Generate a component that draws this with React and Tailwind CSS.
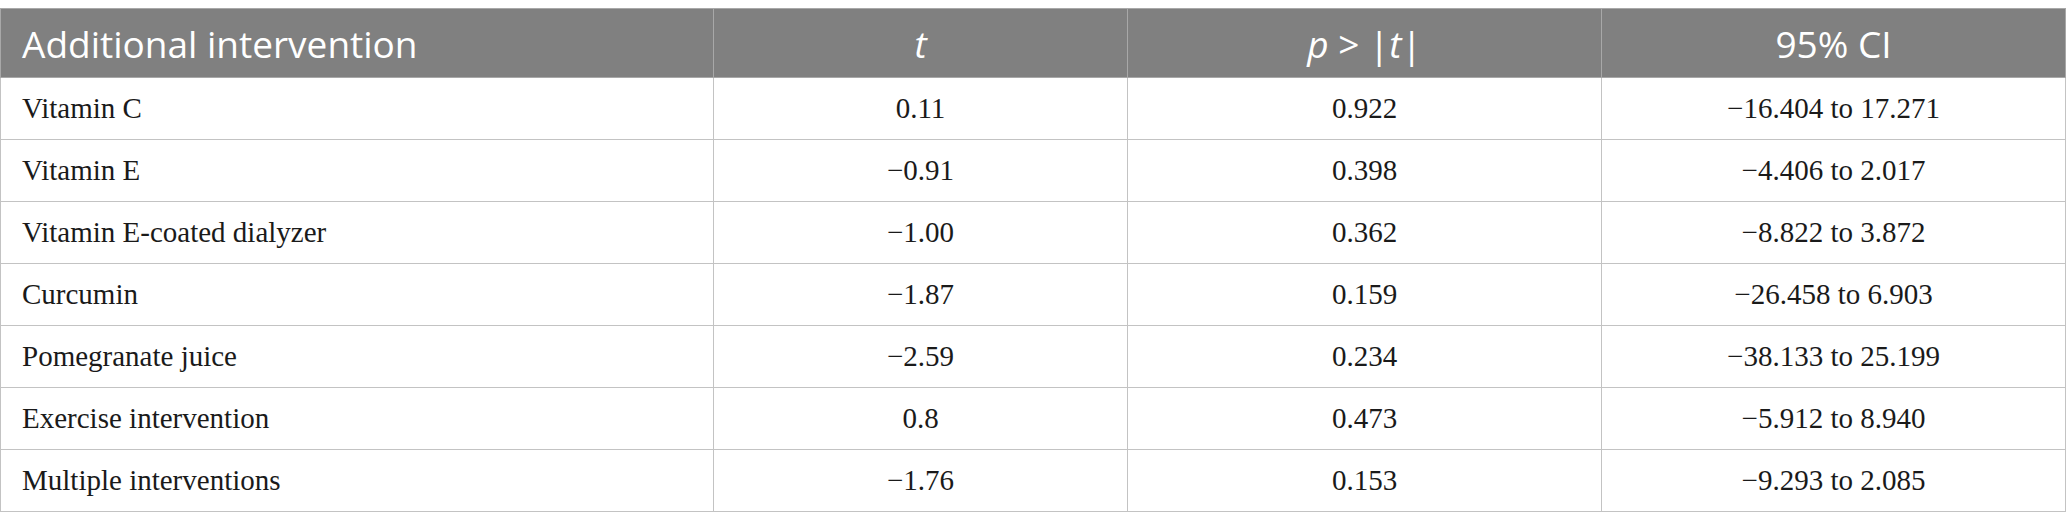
import React from 'react';

const rows = [
  ['Vitamin C', '0.11', '0.922', '\u221216.404 to 17.271'],
  ['Vitamin E', '\u22120.91', '0.398', '\u22124.406 to 2.017'],
  ['Vitamin E-coated dialyzer', '\u22121.00', '0.362', '\u22128.822 to 3.872'],
  ['Curcumin', '\u22121.87', '0.159', '\u221226.458 to 6.903'],
  ['Pomegranate juice', '\u22122.59', '0.234', '\u221238.133 to 25.199'],
  ['Exercise intervention', '0.8', '0.473', '\u22125.912 to 8.940'],
  ['Multiple interventions', '\u22121.76', '0.153', '\u22129.293 to 2.085']
];

const App = () => {
  return (
    <div className="bg-white pt-2 w-[2067px] h-[530px]">
      <table className="table-fixed border-collapse w-[2065px] border border-[#c3c3c3]">
        <colgroup>
          <col className="w-[713px]" />
          <col className="w-[414px]" />
          <col className="w-[474px]" />
          <col className="w-[464px]" />
        </colgroup>
        <thead>
          <tr className="bg-[#808080] text-white font-['Open_Sans',sans-serif] text-[37px] leading-none">
            <th className="h-[69px] px-[21px] text-left font-normal border border-[#a8a8a8]">Additional intervention</th>
            <th className="h-[69px] text-center font-normal italic border border-[#a8a8a8]">t</th>
            <th className="h-[69px] text-center font-normal border border-[#a8a8a8]">
              <span className="italic">p</span> &gt; |<span className="italic">t</span>|
            </th>
            <th className="h-[69px] text-center font-normal border border-[#a8a8a8]">95% CI</th>
          </tr>
        </thead>
        <tbody className="font-['Liberation_Serif',serif] text-[29px] text-[#1a1a1a]">
          {rows.map((row) => (
            <tr key={row[0]}>
              <td className="h-[62px] px-[21px] text-left border border-[#c3c3c3]">{row[0]}</td>
              <td className="h-[62px] text-center border border-[#c3c3c3]">{row[1]}</td>
              <td className="h-[62px] text-center border border-[#c3c3c3]">{row[2]}</td>
              <td className="h-[62px] text-center border border-[#c3c3c3]">{row[3]}</td>
            </tr>
          ))}
        </tbody>
      </table>
    </div>
  );
};

export default App;
